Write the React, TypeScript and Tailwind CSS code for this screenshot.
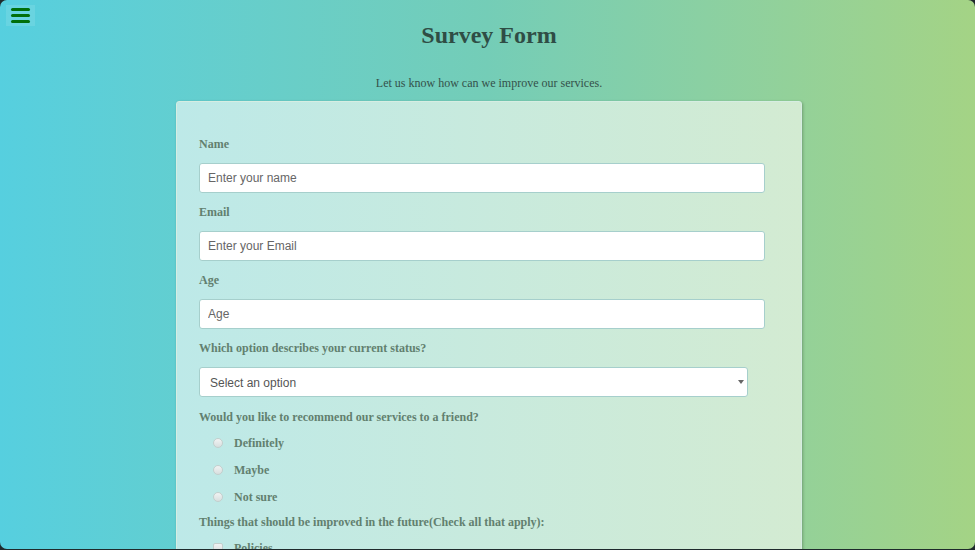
const serif = { fontFamily: '"Liberation Serif", "Times New Roman", serif' };

const textFields = [
  { label: "Name", placeholder: "Enter your name" },
  { label: "Email", placeholder: "Enter your Email" },
  { label: "Age", placeholder: "Age" },
];

const recommend = ["Definitely", "Maybe", "Not sure"];

const Field = ({ label, placeholder }: { label: string; placeholder: string }) => (
  <div className="mb-[10px]">
    <label className="block pt-[1px] text-[12px] leading-[16px] font-bold text-[#62806f]">{label}</label>
    <input
      type="text"
      placeholder={placeholder}
      className="mt-[11px] block h-[30px] w-[566px] rounded-[3px] border border-[#a6cfcc] bg-white px-[8px] text-[12px] text-[#555] placeholder:text-[#666] outline-none"
      style={{ fontFamily: '"Liberation Sans", Arial, sans-serif' }}
    />
  </div>
);

const App = () => {
  return (
    <div className="h-[550px] w-[975px] overflow-hidden bg-[#1f2a2c]" style={serif}>
      <div className="relative h-[549px] overflow-hidden rounded-[7px] bg-gradient-to-r from-[#56cfdf] via-[#74cdb7] to-[#a4d385]">
        <button className="absolute left-[6px] top-[5px] flex h-[21px] w-[29px] flex-col items-center justify-center gap-[3px] bg-white/10">
          <span className="block h-[3px] w-[19px] rounded-full bg-[#006f0a]" />
          <span className="block h-[3px] w-[19px] rounded-full bg-[#006f0a]" />
          <span className="block h-[3px] w-[19px] rounded-full bg-[#006f0a]" />
        </button>

        <div className="pt-[20px] pl-[3px]">
          <h1 className="text-center text-[24px] leading-[30px] font-bold text-[#2f4d45]">Survey Form</h1>
          <p className="mt-[25px] text-center text-[12px] leading-[16px] text-[#34514a]">
            Let us know how can we improve our services.
          </p>

          <div className="mx-auto mt-[10px] w-[626px] rounded-[3px] border border-[#d6ede2] bg-gradient-to-r from-[#bde9e8] to-[#d3ebd2] px-[22px] pt-[33px] pb-[20px] shadow-[1px_1px_3px_rgba(0,0,0,0.25)]">
            {textFields.map((f) => (
              <Field key={f.label} label={f.label} placeholder={f.placeholder} />
            ))}

            <div className="mb-[11px]">
              <label className="block pt-[1px] text-[12px] leading-[16px] font-bold text-[#62806f]">
                Which option describes your current status?
              </label>
              <div className="relative mt-[11px] h-[30px] w-[549px] rounded-[3px] border border-[#a6cfcc] bg-white">
                <span
                  className="absolute left-[10px] top-[8px] text-[12px] leading-[14px] text-[#555]"
                  style={{ fontFamily: '"Liberation Sans", Arial, sans-serif' }}
                >
                  Select an option
                </span>
                <span className="absolute right-[3px] top-[12px] h-0 w-0 border-x-[3px] border-t-[4px] border-x-transparent border-t-[#666]" />
              </div>
            </div>

            <label className="block pt-[1px] text-[12px] leading-[16px] font-bold text-[#62806f]">
              Would you like to recommend our services to a friend?
            </label>
            <div className="mt-[10px] flex flex-col gap-[11px] pl-[14px]">
              {recommend.map((r) => (
                <div key={r} className="flex items-center gap-[11px] leading-[16px]">
                  <span className="block h-[10px] w-[10px] rounded-full border border-[#c4cfcd] bg-gradient-to-b from-[#f1f3f3] to-[#d8dfdf]" />
                  <span className="text-[12px] font-bold text-[#62806f]">{r}</span>
                </div>
              ))}
            </div>

            <label className="mt-[8px] block pt-[1px] text-[12px] leading-[16px] font-bold text-[#62806f]">
              Things that should be improved in the future(Check all that apply):
            </label>
            <div className="mt-[10px] flex flex-col gap-[11px] pl-[14px]">
              {["Policies", "Pricing", "Support"].map((c) => (
                <div key={c} className="flex items-center gap-[11px] leading-[16px]">
                  <span className="block h-[10px] w-[10px] rounded-[2px] border border-[#c4cfcd] bg-gradient-to-b from-[#f1f3f3] to-[#d8dfdf]" />
                  <span className="text-[12px] font-bold text-[#62806f]">{c}</span>
                </div>
              ))}
            </div>
          </div>
        </div>
      </div>
    </div>
  );
};

export default App;
